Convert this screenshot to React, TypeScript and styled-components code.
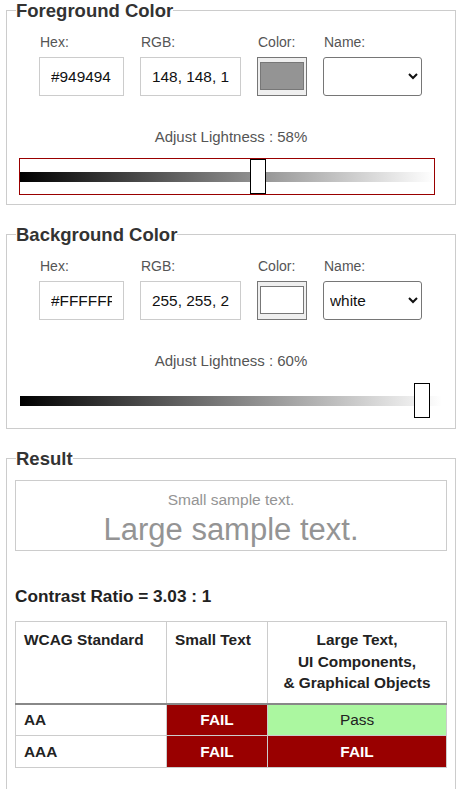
import React from 'react';
import styled, { createGlobalStyle } from 'styled-components';

const GlobalStyle = createGlobalStyle`
  html, body {
    margin: 0;
    padding: 0;
    background: #fff;
  }
  body {
    font-family: 'Liberation Sans', Arial, sans-serif;
    color: #222;
  }
`;

type ColorSet = {
  title: string;
  hex: string;
  rgb: string;
  swatch: string;
  name: string;
  lightness: number;
  slider: number;
  focused?: boolean;
};

const colorSets: ColorSet[] = [
  { title: 'Foreground Color', hex: '#949494', rgb: '148, 148, 148', swatch: '#949494', name: '', lightness: 58, slider: 57.8, focused: true },
  { title: 'Background Color', hex: '#FFFFFF', rgb: '255, 255, 255', swatch: '#ffffff', name: 'white', lightness: 60, slider: 97 },
];

const ColorPanel: React.FC<{ set: ColorSet }> = ({ set }) => (
  <Fieldset>
    <Legend>{set.title}</Legend>
    <FieldRow>
      <Field>
        <Label>Hex:</Label>
        <TextInput $width={85} defaultValue={set.hex} />
      </Field>
      <Field>
        <Label>RGB:</Label>
        <TextInput $width={101} defaultValue={set.rgb} />
      </Field>
      <Field>
        <Label>Color:</Label>
        <Swatch>
          <SwatchFill style={{ background: set.swatch }} />
        </Swatch>
      </Field>
      <Field>
        <Label>Name:</Label>
        <NameSelect defaultValue={set.name}>
          <option value=""></option>
          <option value="white">white</option>
          <option value="gray">gray</option>
          <option value="black">black</option>
        </NameSelect>
      </Field>
    </FieldRow>
    <Lightness>Adjust Lightness : {set.lightness}%</Lightness>
    <SliderBox $focused={!!set.focused}>
      <Range type="range" min={0} max={100} step={0.1} defaultValue={set.slider} />
    </SliderBox>
  </Fieldset>
);

const App: React.FC = () => {
  return (
    <Page>
      <GlobalStyle />
      {colorSets.map((s) => (
        <ColorPanel key={s.title} set={s} />
      ))}
      <Fieldset>
        <Legend>Result</Legend>
        <ResultBody>
          <Sample>
            <SmallSample>Small sample text.</SmallSample>
            <LargeSample>Large sample text.</LargeSample>
          </Sample>
          <Ratio>Contrast Ratio = 3.03 : 1</Ratio>
          <Table>
            <thead>
              <tr>
                <Th $w={151}>WCAG Standard</Th>
                <Th $w={101}>Small Text</Th>
                <Th $center>
                  Large Text,<br />
                  UI Components,<br />
                  &amp; Graphical Objects
                </Th>
              </tr>
            </thead>
            <tbody>
              <tr>
                <Level>AA</Level>
                <Verdict $pass={false}>FAIL</Verdict>
                <Verdict $pass>Pass</Verdict>
              </tr>
              <tr>
                <Level>AAA</Level>
                <Verdict $pass={false}>FAIL</Verdict>
                <Verdict $pass={false}>FAIL</Verdict>
              </tr>
            </tbody>
          </Table>
        </ResultBody>
      </Fieldset>
    </Page>
  );
};

export default App;

const Page = styled.div`
  padding: 0 3px 0 6px;
  width: 450px;
`;

const Fieldset = styled.fieldset`
  margin: 0 0 19px;
  padding: 0 0 9px;
  border: 1px solid #cccccc;
  min-width: 0;
`;

const Legend = styled.legend`
  margin-left: 9px;
  padding: 0;
  font-size: 18.5px;
  font-weight: bold;
  line-height: 21px;
  color: #333;
`;

const FieldRow = styled.div`
  display: flex;
  justify-content: center;
  gap: 16px;
  padding: 13px 1px 0 0;
`;

const Field = styled.div`
  display: flex;
  flex-direction: column;
  gap: 6px;
`;

const Label = styled.label`
  font-size: 14px;
  line-height: 17px;
  color: #555;
  padding-left: 1px;
`;

const TextInput = styled.input<{ $width: number }>`
  box-sizing: border-box;
  width: ${({ $width }) => $width}px;
  height: 39px;
  margin: 0;
  padding: 0 11px;
  border: 1px solid #cccccc;
  border-radius: 0;
  font-family: 'Liberation Sans', Arial, sans-serif;
  font-size: 15.4px;
  color: #111;
  background: #fff;
  outline: none;
`;

const Swatch = styled.div`
  box-sizing: border-box;
  width: 50px;
  height: 39px;
  padding: 4px 2px 5px;
  border: 1px solid #767676;
  background: #efefef;
  display: flex;
`;

const SwatchFill = styled.div`
  flex: 1;
  border: 1px solid #777;
`;

const NameSelect = styled.select`
  box-sizing: border-box;
  width: 99px;
  height: 39px;
  margin: 0;
  padding: 0 2px;
  border: 1px solid #767676;
  border-radius: 3px;
  background: #fff;
  font-family: 'Liberation Sans', Arial, sans-serif;
  font-size: 15.4px;
  color: #111;
`;

const Lightness = styled.div`
  margin-top: 32px;
  text-align: center;
  font-size: 15px;
  line-height: 17px;
  color: #555;
`;

const SliderBox = styled.div<{ $focused: boolean }>`
  box-sizing: border-box;
  margin: 13px 0 0 12px;
  width: ${({ $focused }) => ($focused ? 416 : 424)}px;
  height: 37px;
  border: 1px solid ${({ $focused }) => ($focused ? '#990000' : 'transparent')};
  display: flex;
`;

const Range = styled.input`
  -webkit-appearance: none;
  appearance: none;
  flex: 1;
  margin: 0;
  height: 35px;
  background: transparent;
  outline: none;

  &::-webkit-slider-runnable-track {
    height: 10px;
    background: linear-gradient(to right, #000 0%, #fff 100%);
  }
  &::-webkit-slider-thumb {
    -webkit-appearance: none;
    box-sizing: border-box;
    width: 16px;
    height: 35px;
    margin-top: -13px;
    border: 1px solid #000;
    background: #fff;
  }
`;

const ResultBody = styled.div`
  padding: 11px 8px 40px;
`;

const Sample = styled.div`
  border: 1px solid #cccccc;
  height: 71px;
  box-sizing: border-box;
  padding-top: 9px;
  text-align: center;
  color: #949494;
`;

const SmallSample = styled.div`
  font-size: 15.5px;
  line-height: 19px;
`;

const LargeSample = styled.div`
  margin-top: 3px;
  font-size: 31px;
  line-height: 36px;
`;

const Ratio = styled.h3`
  margin: 35px 0 15px;
  font-size: 17.2px;
  line-height: 20px;
  font-weight: bold;
  color: #222;
`;

const Table = styled.table`
  width: 100%;
  border-collapse: collapse;
  border: 1px solid #cccccc;
  font-size: 15.4px;
  color: #222;
`;

const Th = styled.th<{ $w?: number; $center?: boolean }>`
  ${({ $w }) => ($w ? `width: ${$w}px;` : '')}
  box-sizing: border-box;
  padding: 7px 8px 9px;
  text-align: ${({ $center }) => ($center ? 'center' : 'left')};
  vertical-align: top;
  line-height: 21.5px;
  border: 1px solid #cccccc;
  border-bottom: 2px solid #888;
  font-weight: bold;
`;

const Level = styled.td`
  height: 32px;
  padding: 0 8px;
  border: 1px solid #cccccc;
  font-weight: bold;
  box-sizing: border-box;
`;

const Verdict = styled.td<{ $pass: boolean }>`
  height: 32px;
  padding: 0 8px;
  text-align: center;
  border: 1px solid #cccccc;
  box-sizing: border-box;
  background: ${({ $pass }) => ($pass ? '#abf7a0' : '#990000')};
  color: ${({ $pass }) => ($pass ? '#222' : '#fff')};
  font-weight: ${({ $pass }) => ($pass ? 'normal' : 'bold')};
`;
